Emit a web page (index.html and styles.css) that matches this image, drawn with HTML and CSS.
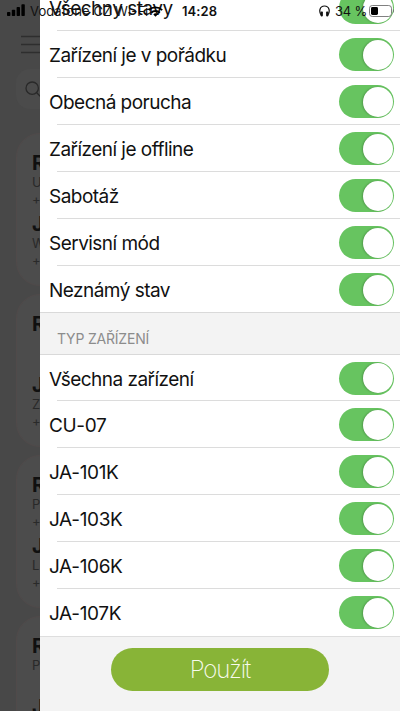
FILE: index.html
```html
<!DOCTYPE html>
<html lang="cs">
<head>
    <meta charset="UTF-8">
    <meta name="viewport" content="width=device-width, initial-scale=1.0">
    <title>Filtr</title>
    <link rel="stylesheet" href="styles.css">
</head>
<body>
    <div class="screen">
        <!-- Dimmed page under the drawer -->
        <div class="page">
            <svg class="menu-icon" width="24" height="20" viewBox="0 0 24 20">
                <path d="M0 2.5h24M0 10.5h24M0 18.5h24" stroke="#2e2e2e" stroke-width="1.3"/>
            </svg>
            <div class="search">
                <svg width="18" height="18" viewBox="0 0 18 18" fill="none" stroke="#292929" stroke-width="1.3">
                    <circle cx="7.2" cy="7.2" r="6.2"/>
                    <path d="M11.7 11.7l4.5 4.5"/>
                </svg>
            </div>
            <div class="card">
                <b>R</b><span>U</span><span>+</span>
                <b>J</b><span>W</span><span>+</span>
            </div>
            <div class="card">
                <b>R</b><span></span><span></span>
                <b>J</b><span>Z</span><span>+</span>
            </div>
            <div class="card">
                <b>R</b><span>P</span><span>+</span>
                <b>J</b><span>L</span><span>+</span>
            </div>
            <div class="card">
                <b>R</b><span>P</span><span></span>
                <b>J</b><span></span><span></span>
            </div>
        </div>

        <div class="drawer">
            <div class="list states">
                <div class="row"><span class="label">Všechny stavy</span><i class="toggle"></i></div>
                <div class="row"><span class="label">Zařízení je v pořádku</span><i class="toggle"></i></div>
                <div class="row"><span class="label">Obecná porucha</span><i class="toggle"></i></div>
                <div class="row"><span class="label">Zařízení je offline</span><i class="toggle"></i></div>
                <div class="row"><span class="label">Sabotáž</span><i class="toggle"></i></div>
                <div class="row"><span class="label">Servisní mód</span><i class="toggle"></i></div>
                <div class="row"><span class="label">Neznámý stav</span><i class="toggle"></i></div>
            </div>
            <div class="section-title"><span>TYP ZAŘÍZENÍ</span></div>
            <div class="list types">
                <div class="row"><span class="label">Všechna zařízení</span><i class="toggle"></i></div>
                <div class="row"><span class="label code">CU-07</span><i class="toggle"></i></div>
                <div class="row"><span class="label code">JA-101K</span><i class="toggle"></i></div>
                <div class="row"><span class="label code">JA-103K</span><i class="toggle"></i></div>
                <div class="row"><span class="label code">JA-106K</span><i class="toggle"></i></div>
                <div class="row"><span class="label code">JA-107K</span><i class="toggle"></i></div>
            </div>
            <div class="footer">
                <button type="button" class="apply">Použít</button>
            </div>
        </div>

        <div class="status-bar">
            <svg class="signal" width="18" height="12" viewBox="0 0 18 12">
                <rect x="0" y="8" width="3.4" height="4" rx="0.8"/>
                <rect x="4.8" y="5.8" width="3.4" height="6.2" rx="0.8"/>
                <rect x="9.6" y="3" width="3.4" height="9" rx="0.8"/>
                <rect x="14.4" y="0.3" width="3.4" height="11.7" rx="0.8"/>
            </svg>
            <span class="carrier">Vodafone CZ Wi-Fi</span>
            <svg class="wifi" width="15" height="11" viewBox="0 0 15 11" fill="none" stroke="#000" stroke-width="1.9">
                <path d="M0.8 4.1a9.6 9.6 0 0 1 13.4 0M3.2 6.7a6.2 6.2 0 0 1 8.6 0"/>
                <path d="M5.3 8.4a3.2 3.2 0 0 1 4.4 0L7.5 10.8z" fill="#000" stroke="none"/>
            </svg>
            <span class="time">14:28</span>
            <svg class="headphones" width="11" height="12" viewBox="0 0 11 12">
                <path d="M2.2 10.2C-0.4 6.5 0.6 1 5.5 1s5.9 5.5 3.3 9.2" fill="none" stroke="#111" stroke-width="1.2"/>
                <rect x="1.6" y="6.4" width="2.3" height="5" rx="0.8" fill="#111"/>
                <rect x="7.1" y="6.4" width="2.3" height="5" rx="0.8" fill="#111"/>
            </svg>
            <span class="percent">34 %</span>
            <svg class="battery" width="26" height="12" viewBox="0 0 26 12">
                <rect x="0.5" y="0.5" width="22" height="11" rx="2.8" fill="none" stroke="#555" stroke-opacity="0.75"/>
                <rect x="2" y="2" width="7" height="8" rx="1.4" fill="#000"/>
                <path d="M24 4v4c1.3-.6 1.3-3.4 0-4z" fill="#555" fill-opacity="0.75"/>
            </svg>
        </div>
    </div>
</body>
</html>
```
FILE: styles.css
```css
/* Global Styles */
* {
    box-sizing: border-box;
}

body {
    font-family: Inter, "Noto Sans", sans-serif;
    margin: 0;
    background-color: #484848;
    color: #111;
}

.screen {
    position: relative;
    width: 400px;
    height: 711px;
    overflow: hidden;
}

/* Dimmed page */
.page {
    height: 711px;
    padding: 34px 0 0 16px;
    overflow: hidden;
    background-color: #484848;
}

.menu-icon {
    display: block;
    margin-left: 5px;
}

.search {
    height: 40px;
    margin: 15px 0 24px;
    padding: 12px 0 0 9px;
    border-radius: 14px;
    background-color: #4b4b4b;
}

.card {
    width: 368px;
    height: 153px;
    margin-bottom: 8px;
    padding: 18px 0 0 15px;
    border: 1px solid #504a4a;
    border-radius: 24px;
    background-color: #4c4c4c;
}

.card b,
.card span {
    display: block;
}

.card b {
    height: 22px;
    font-size: 20px;
    line-height: 22px;
    color: #101010;
}

.card span {
    height: 17px;
    font-size: 13px;
    line-height: 17px;
    color: #292929;
}

.card span + b {
    margin-top: 5px;
}

/* Drawer */
.drawer {
    position: absolute;
    top: 0;
    right: 0;
    width: 360px;
    height: 711px;
    display: flex;
    flex-direction: column;
    overflow: hidden;
    background-color: #f3f3f3;
}

.list {
    flex: none;
    background-color: #fff;
}

/* the list is scrolled a little */
.states {
    margin-top: -16px;
}

.row {
    display: flex;
    align-items: center;
    justify-content: space-between;
    height: 47px;
    padding: 0 6px 0 9px;
    background: linear-gradient(#dcdcdc, #dcdcdc) 17px 100% / 100% 1px no-repeat;
}

.row:last-child {
    background: none;
}

.types .row:first-child {
    height: 46px;
}

.label {
    padding-top: 3px;
    font-size: 19px;
    line-height: 24px;
    letter-spacing: -0.53px;
    white-space: nowrap;
}

.code {
    letter-spacing: -0.35px;
}

.toggle {
    flex: none;
    width: 55px;
    height: 33px;
    padding: 1.5px;
    border-radius: 17px;
    background-color: #67c460;
}

.toggle::after {
    content: "";
    display: block;
    width: 30px;
    height: 30px;
    margin-left: auto;
    border-radius: 50%;
    background-color: #fff;
    box-shadow: -1px 0 2px rgba(0, 0, 0, 0.22);
}

.section-title {
    flex: none;
    height: 43px;
    margin-top: -1px;
    padding: 17px 0 0 17px;
    border-top: 1px solid #d9d9d9;
    border-bottom: 1px solid #d9d9d9;
    background-color: #f3f3f3;
    font-size: 14px;
    line-height: 18px;
    letter-spacing: -0.2px;
    color: #8c8c8c;
}

.footer {
    flex: 1;
    padding-top: 11px;
    border-top: 1px solid #dedede;
    text-align: center;
}

.apply {
    width: 218px;
    height: 43px;
    padding: 0;
    border: none;
    border-radius: 22px;
    background-color: #88b437;
    color: #f8fbee;
    font-family: inherit;
    font-size: 24px;
    font-weight: 200;
    line-height: 43px;
    letter-spacing: -1.2px;
}

/* Status bar */
.status-bar {
    position: absolute;
    top: 0;
    left: 0;
    width: 400px;
    height: 22px;
    display: flex;
    align-items: center;
    padding: 0 5px 0 7px;
    font-size: 13px;
    line-height: 22px;
    white-space: nowrap;
}

.signal {
    margin-top: -2px;
}

.carrier {
    width: 114px;
    margin-left: 5px;
    letter-spacing: 0.1px;
}

.wifi {
    margin-left: 4px;
}

.time {
    margin-left: 19px;
    font-weight: 600;
    letter-spacing: 0.1px;
}

.headphones {
    margin-left: auto;
}

.percent {
    width: 31px;
    margin-left: 5px;
    letter-spacing: -0.2px;
}

.battery {
    margin-left: 3px;
}
```
